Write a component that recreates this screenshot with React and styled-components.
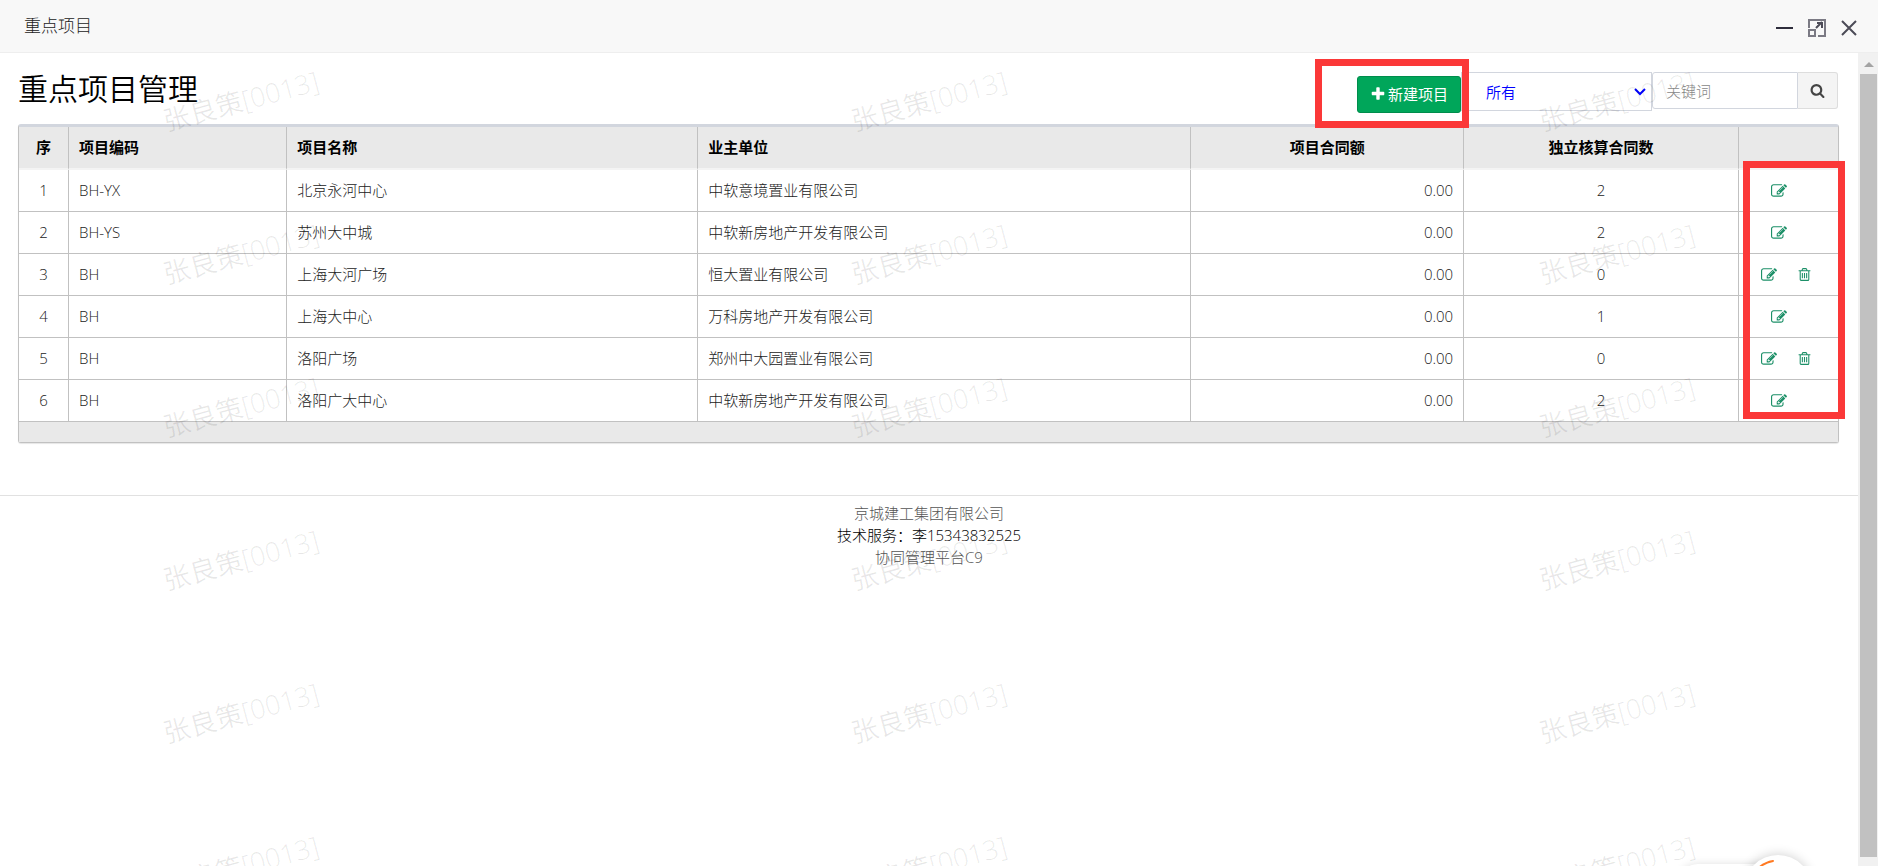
import React from "react";
import styled, { createGlobalStyle } from "styled-components";

const PATHS = {
  edit: "M888 1184l116-116-152-152-116 116v56h96v96h56zm440-720q-16-16-33 1l-350 350q-17 17-1 33t33-1l350-350q17-17 1-33zm80 594v190q0 119-84.5 203.5t-203.5 84.5h-832q-119 0-203.5-84.5t-84.5-203.5v-832q0-119 84.5-203.5t203.5-84.5h832q63 0 117 25 15 7 18 23 3 17-9 29l-49 49q-14 14-32 8-23-6-45-6h-832q-66 0-113 47t-47 113v832q0 66 47 113t113 47h832q66 0 113-47t47-113v-126q0-13 9-22l64-64q15-15 35-7t20 29zm-96-738l288 288-672 672h-288v-288zm444 132l-92 92-288-288 92-92q28-28 68-28t68 28l152 152q28 28 28 68t-28 68z",
  trash: "M704 736v576q0 14-9 23t-23 9h-64q-14 0-23-9t-9-23v-576q0-14 9-23t23-9h64q14 0 23 9t9 23zm256 0v576q0 14-9 23t-23 9h-64q-14 0-23-9t-9-23v-576q0-14 9-23t23-9h64q14 0 23 9t9 23zm256 0v576q0 14-9 23t-23 9h-64q-14 0-23-9t-9-23v-576q0-14 9-23t23-9h64q14 0 23 9t9 23zm128 724v-948h-896v948q0 22 7 40.5t14.5 27 10.5 8.5h832q3 0 10.5-8.5t14.5-27 7-40.5zm-672-1076h448l-48-117q-7-9-17-11h-317q-10 2-17 11zm928 32v64q0 14-9 23t-23 9h-96v948q0 83-47 143.5t-113 60.5h-832q-66 0-113-58.5t-47-141.5v-952h-96q-14 0-23-9t-9-23v-64q0-14 9-23t23-9h309l70-167q15-37 54-63t79-26h320q40 0 79 26t54 63l70 167h309q14 0 23 9t9 23z",
  plus: "M1600 736v192q0 40-28 68t-68 28h-416v416q0 40-28 68t-68 28h-192q-40 0-68-28t-28-68v-416h-416q-40 0-68-28t-28-68v-192q0-40 28-68t68-28h416v-416q0-40 28-68t68-28h192q40 0 68 28t28 68v416h416q40 0 68 28t28 68z",
  search: "M1216 832q0-185-131.5-316.5t-316.5-131.5-316.5 131.5-131.5 316.5 131.5 316.5 316.5 131.5 316.5-131.5 131.5-316.5zm512 832q0 52-38 90t-90 38q-54 0-90-38l-343-342q-179 124-399 124-143 0-273.5-55.5t-225-150-150-225-55.5-273.5 55.5-273.5 150-225 225-150 273.5-55.5 273.5 55.5 225 150 150 225 55.5 273.5q0 220-124 399l343 343q37 37 37 90z",
};

const PROJECTS = [
  { code: "BH-YX", name: "北京永河中心", owner: "中软意境置业有限公司", amount: "0.00", count: 2 },
  { code: "BH-YS", name: "苏州大中城", owner: "中软新房地产开发有限公司", amount: "0.00", count: 2 },
  { code: "BH", name: "上海大河广场", owner: "恒大置业有限公司", amount: "0.00", count: 0 },
  { code: "BH", name: "上海大中心", owner: "万科房地产开发有限公司", amount: "0.00", count: 1 },
  { code: "BH", name: "洛阳广场", owner: "郑州中大园置业有限公司", amount: "0.00", count: 0 },
  { code: "BH", name: "洛阳广大中心", owner: "中软新房地产开发有限公司", amount: "0.00", count: 2 },
];

const GlobalStyle = createGlobalStyle`
  *, *::before, *::after { box-sizing: border-box; }
  body {
    margin: 0;
    background: #fff;
    color: #222;
    font: 300 15px/22px "Open Sans", "Noto Sans CJK SC", sans-serif;
  }
  button, input, select { font: inherit; }
`;

const Window = styled.div`
  position: relative;
  display: flex;
  flex-direction: column;
  height: 100vh;
  overflow: hidden;
`;

const TitleBar = styled.header`
  display: flex;
  align-items: center;
  justify-content: space-between;
  flex: none;
  height: 53px;
  padding: 0 19px 0 24px;
  background: #f8f8f8;
  border-bottom: 1px solid #eee;
  font-size: 17px;
`;

const WindowControls = styled.div`
  display: flex;
  gap: 12px;
  padding-top: 4px;
`;

const ControlButton = styled.button`
  display: flex;
  padding: 0;
  border: 0;
  background: none;
  color: #2e2d3c;
  cursor: pointer;
`;

const Body = styled.div`
  display: flex;
  flex: 1;
  min-height: 0;
`;

const Page = styled.main`
  position: relative;
  flex: 1;
  min-width: 0;
  overflow: hidden;
`;

const Section = styled.section`
  padding: 19px 19px 0 18px;
`;

const Toolbar = styled.div`
  display: flex;
  align-items: flex-start;
  justify-content: space-between;
  height: 52px;
`;

const PageTitle = styled.h1`
  margin: 0;
  color: #000;
  font-size: 30px;
  font-weight: 350;
  line-height: 34px;
`;

const Filters = styled.form`
  display: flex;
  align-items: flex-start;
  margin-right: 1px;
`;

const Marked = styled.div`
  position: relative;
  padding-top: 4px;
`;

/* Red outline drawn over the area it draws attention to. */
const Highlight = styled.span`
  position: absolute;
  inset: ${(p) => p.$inset};
  width: ${(p) => p.$width || "auto"};
  z-index: 3;
  border: 7px solid #fb3838;
  pointer-events: none;
`;

const CreateButton = styled.button`
  display: flex;
  align-items: center;
  justify-content: center;
  gap: 2px;
  width: 104px;
  height: 37px;
  padding: 0 0 2px;
  border: 1px solid #008d4c;
  border-radius: 3px;
  background: #00a65a;
  color: #fff;
  font-weight: 400;
  cursor: pointer;
`;

const SelectWrap = styled.div`
  position: relative;
  width: 191px;
`;

const Select = styled.select`
  width: 100%;
  height: 39px;
  padding: 0 24px;
  border: 1px solid #d2d6de;
  border-radius: 0;
  background: #fff;
  color: #00f;
  font-weight: 350;
  appearance: none;
`;

const SelectArrow = styled.svg`
  position: absolute;
  top: 14px;
  right: 6px;
  pointer-events: none;
`;

const SearchInput = styled.input`
  width: 146px;
  height: 37px;
  padding: 0 13px;
  border: 1px solid #d2d6de;
  border-radius: 3px 0 0 3px;
  background: #fff;
  &::placeholder { color: #888; opacity: 1; }
`;

const SearchButton = styled.button`
  display: flex;
  align-items: center;
  justify-content: center;
  width: 40px;
  height: 37px;
  padding: 0;
  border: 1px solid #ddd;
  border-left: 0;
  border-radius: 0 3px 3px 0;
  background: #f4f4f4;
  color: #444;
  cursor: pointer;
`;

const Panel = styled.div`
  position: relative;
  border: 1px solid #c1c1c1;
  border-top: 3px solid #d2d6de;
  border-radius: 3px;
  background: #fff;
  box-shadow: 0 1px 1px rgba(0, 0, 0, 0.1);
`;

const Table = styled.table`
  width: 100%;
  table-layout: fixed;
  border-collapse: separate;
  border-spacing: 0;
`;

const Col = styled.col`
  width: ${(p) => p.$width};
`;

const HeadCell = styled.th`
  height: 43px;
  padding: 0 10px 2px;
  border-right: 1px solid #c1c1c1;
  border-bottom: 2px solid #f4f4f4;
  background: #e9e9e9;
  color: #000;
  font-weight: 700;
  text-align: ${(p) => p.$align || "left"};
  &:last-child { border-right: 0; }
`;

const Cell = styled.td`
  height: 42px;
  padding: 0 10px 2px;
  border-right: 1px solid #c1c1c1;
  border-bottom: 1px solid #c1c1c1;
  text-align: ${(p) => p.$align || "left"};
  &:last-child { padding-bottom: 0; border-right: 0; }
`;

const PanelFooter = styled.div`
  height: 20px;
  background: #e9e9e9;
`;

const Actions = styled.div`
  display: flex;
  justify-content: center;
`;

const IconButton = styled.button`
  display: flex;
  margin-right: ${(p) => p.$space};
  padding: 0;
  border: 0;
  background: none;
  color: #1d9068;
  cursor: pointer;
`;

const PageFooter = styled.footer`
  margin-top: 52px;
  padding-top: 6px;
  border-top: 1px solid #e1e1e1;
  text-align: center;
`;

const FooterLine = styled.div`
  color: ${(p) => (p.$strong ? "#000" : "#555")};
`;

const Watermarks = styled.div`
  position: absolute;
  inset: 0;
  z-index: 2;
  display: grid;
  grid-template-columns: repeat(3, 688px);
  grid-auto-rows: 153px;
  justify-content: center;
  align-content: start;
  margin-top: -29px;
  overflow: hidden;
  pointer-events: none;
`;

const Watermark = styled.span`
  place-self: center;
  color: rgba(0, 0, 0, 0.09);
  font-size: 27px;
  font-weight: 350;
  line-height: 40px;
  transform: rotate(-15deg);
`;

const ScrollTrack = styled.div`
  display: flex;
  flex: none;
  flex-direction: column;
  width: 20px;
  padding: 0 1px 9px 2px;
  background: #f1f1f1;
`;

const ScrollArrow = styled.svg`
  flex: none;
  width: 17px;
  height: 21px;
`;

const ScrollThumb = styled.div`
  flex: 1;
  background: #c1c1c1;
`;

const Assistant = styled.div`
  position: absolute;
  right: 66px;
  bottom: -57px;
  z-index: 4;
  width: 68px;
  height: 68px;
  border-radius: 50%;
  background: #fff;
  box-shadow: 0 0 12px rgba(0, 0, 0, 0.2);
`;

const AssistantTray = styled.div`
  position: absolute;
  right: 100px;
  bottom: -38px;
  z-index: 4;
  width: 100px;
  height: 40px;
  border-radius: 20px;
  background: #fff;
  box-shadow: 0 0 8px rgba(0, 0, 0, 0.12);
`;

function Glyph({ name, size = 15 }) {
  return (
    <svg width={size} height={size} viewBox="0 0 1792 1792" fill="currentColor" aria-hidden="true">
      <path d={PATHS[name]} />
    </svg>
  );
}

function ProjectRow({ index, project }) {
  return (
    <tr>
      <Cell $align="center">{index}</Cell>
      <Cell>{project.code}</Cell>
      <Cell>{project.name}</Cell>
      <Cell>{project.owner}</Cell>
      <Cell $align="right">{project.amount}</Cell>
      <Cell $align="center">{project.count}</Cell>
      <Cell>
        <Actions>
          <IconButton type="button" aria-label="编辑" $space="20px">
            <Glyph name="edit" size={16} />
          </IconButton>
          {project.count === 0 && (
            <IconButton type="button" aria-label="删除" $space="4px">
              <Glyph name="trash" size={15} />
            </IconButton>
          )}
        </Actions>
      </Cell>
    </tr>
  );
}

export default function App() {
  return (
    <Window>
      <GlobalStyle />
      <TitleBar>
        <span>重点项目</span>
        <WindowControls>
          <ControlButton type="button" aria-label="最小化">
            <svg width="20" height="20" viewBox="0 0 20 20">
              <path d="M1 10h17" stroke="currentColor" strokeWidth="2" />
            </svg>
          </ControlButton>
          <ControlButton type="button" aria-label="最大化">
            <svg width="20" height="20" viewBox="0 0 20 20" fill="none" stroke="#7b7a84" strokeWidth="2">
              <path d="M2 10V2h16v16h-7M2 12h6v6H2z" />
              <path d="M9 10l6-6M10 5h5v5" stroke="#4c4b57" />
            </svg>
          </ControlButton>
          <ControlButton type="button" aria-label="关闭">
            <svg width="20" height="20" viewBox="0 0 20 20" fill="none" stroke="#4c4b57" strokeWidth="2">
              <path d="M3 3l14 14M17 3L3 17" />
            </svg>
          </ControlButton>
        </WindowControls>
      </TitleBar>
      <Body>
        <Page>
          <Section>
            <Toolbar>
              <PageTitle>重点项目管理</PageTitle>
              <Filters onSubmit={(e) => e.preventDefault()}>
                <Marked>
                  <CreateButton type="button">
                    <Glyph name="plus" size={16} />
                    新建项目
                  </CreateButton>
                  <Highlight $inset="-13px -8px -15px -42px" />
                </Marked>
                <SelectWrap>
                  <Select aria-label="范围" defaultValue="all">
                    <option value="all">所有</option>
                  </Select>
                  <SelectArrow width="12" height="12" viewBox="0 0 12 12" fill="none" stroke="#00f" strokeWidth="2">
                    <path d="M1 3l5 5 5-5" />
                  </SelectArrow>
                </SelectWrap>
                <SearchInput aria-label="关键词" placeholder="关键词" />
                <SearchButton type="submit" aria-label="搜索">
                  <Glyph name="search" />
                </SearchButton>
              </Filters>
            </Toolbar>
            <Panel>
              <Table>
                <colgroup>
                  <Col $width="50px" />
                  <Col $width="12%" />
                  <Col $width="22.6%" />
                  <Col $width="27.1%" />
                  <Col $width="15%" />
                  <Col />
                  <Col $width="99px" />
                </colgroup>
                <thead>
                  <tr>
                    <HeadCell $align="center">序</HeadCell>
                    <HeadCell>项目编码</HeadCell>
                    <HeadCell>项目名称</HeadCell>
                    <HeadCell>业主单位</HeadCell>
                    <HeadCell $align="center">项目合同额</HeadCell>
                    <HeadCell $align="center">独立核算合同数</HeadCell>
                    <HeadCell aria-label="操作" />
                  </tr>
                </thead>
                <tbody>
                  {PROJECTS.map((project, i) => (
                    <ProjectRow key={i} index={i + 1} project={project} />
                  ))}
                </tbody>
              </Table>
              <PanelFooter />
              <Highlight $inset="34px -7px 23px auto" $width="102px" />
            </Panel>
          </Section>
          <PageFooter>
            <FooterLine>京城建工集团有限公司</FooterLine>
            <FooterLine $strong>技术服务：李15343832525</FooterLine>
            <FooterLine>协同管理平台C9</FooterLine>
          </PageFooter>
          <Watermarks aria-hidden="true">
            {Array.from({ length: 18 }, (_, i) => (
              <Watermark key={i}>张良策[0013]</Watermark>
            ))}
          </Watermarks>
        </Page>
        <ScrollTrack>
          <ScrollArrow viewBox="0 0 17 21">
            <path d="M4 14l5-5 5 5z" fill="#a3a3a3" />
          </ScrollArrow>
          <ScrollThumb />
        </ScrollTrack>
      </Body>
      <AssistantTray />
      <Assistant>
        <svg width="68" height="68" viewBox="0 0 68 68" fill="none" aria-hidden="true">
          <path d="M14 13.500A29 29 0 0 1 29 6" stroke="#ff7a22" strokeWidth="2" strokeLinecap="round" />
        </svg>
      </Assistant>
    </Window>
  );
}
